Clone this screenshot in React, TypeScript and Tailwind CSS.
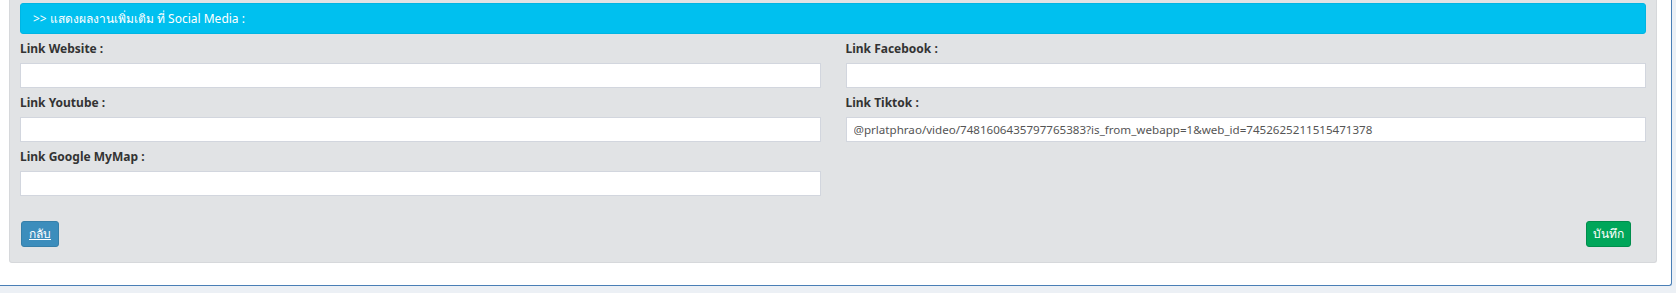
import React from 'react';

// ── Form fields (left / right column order) ───────────────────────────────────
const fields: { label: string; value?: string }[] = [
  { label: 'Link Website :' },
  { label: 'Link Facebook :' },
  { label: 'Link Youtube :' },
  {
    label: 'Link Tiktok :',
    value: '@prlatphrao/video/7481606435797765383?is_from_webapp=1&web_id=7452625211515471378',
  },
  { label: 'Link Google MyMap :' },
];

const FONT = { fontFamily: '"Noto Sans", "Open Sans", sans-serif' };

const Field = ({ label, value }: { label: string; value?: string }) => (
  <div className="pt-[7px]">
    <label className="block h-[16px] leading-[16px] mb-[6px] text-[12px] font-bold text-[#333]">
      {label}
    </label>
    <input
      type="text"
      defaultValue={value ?? ''}
      className="block w-full h-[25px] bg-white border border-[#d2d6de] px-[7px] text-[11.6px] text-[#555] outline-none"
      style={FONT}
    />
  </div>
);

export default function App() {
  return (
    <div className="w-full h-[293px] bg-[#ecf0f5] overflow-hidden" style={FONT}>
      {/* ── White card ─────────────────────────────────────────────── */}
      <div className="w-[1672px] bg-white border-r border-b border-[#4a7fb6] rounded-br-[3px] pl-[9px] pr-[14px] pb-[22px]">
        {/* ── Gray panel ───────────────────────────────────────────── */}
        <div className="bg-[#e1e3e5] border-x border-b border-[#d6d8db] rounded-b-[3px] pt-[3px] px-[10px] pb-[15px]">
          <div className="h-[31px] flex items-center bg-[#00c0ef] border border-[#00b5e3] rounded-[3px] pl-[12px] text-[12px] text-white">
            &gt;&gt; แสดงผลงานเพิ่มเติม ที่ Social Media :
          </div>

          <div className="grid grid-cols-2 gap-x-[25px]">
            {fields.map((f) => (
              <Field key={f.label} label={f.label} value={f.value} />
            ))}
          </div>

          <div className="flex justify-between items-center mt-[25px]">
            <button className="h-[26px] w-[38px] ml-[1px] bg-[#3c8dbc] border border-[#367fa9] rounded-[3px] text-white text-[12px] underline">
              กลับ
            </button>
            <button className="h-[26px] w-[45px] mr-[15px] bg-[#00a65a] border border-[#008d4c] rounded-[3px] text-white text-[12px]">
              บันทึก
            </button>
          </div>
        </div>
      </div>
    </div>
  );
}
